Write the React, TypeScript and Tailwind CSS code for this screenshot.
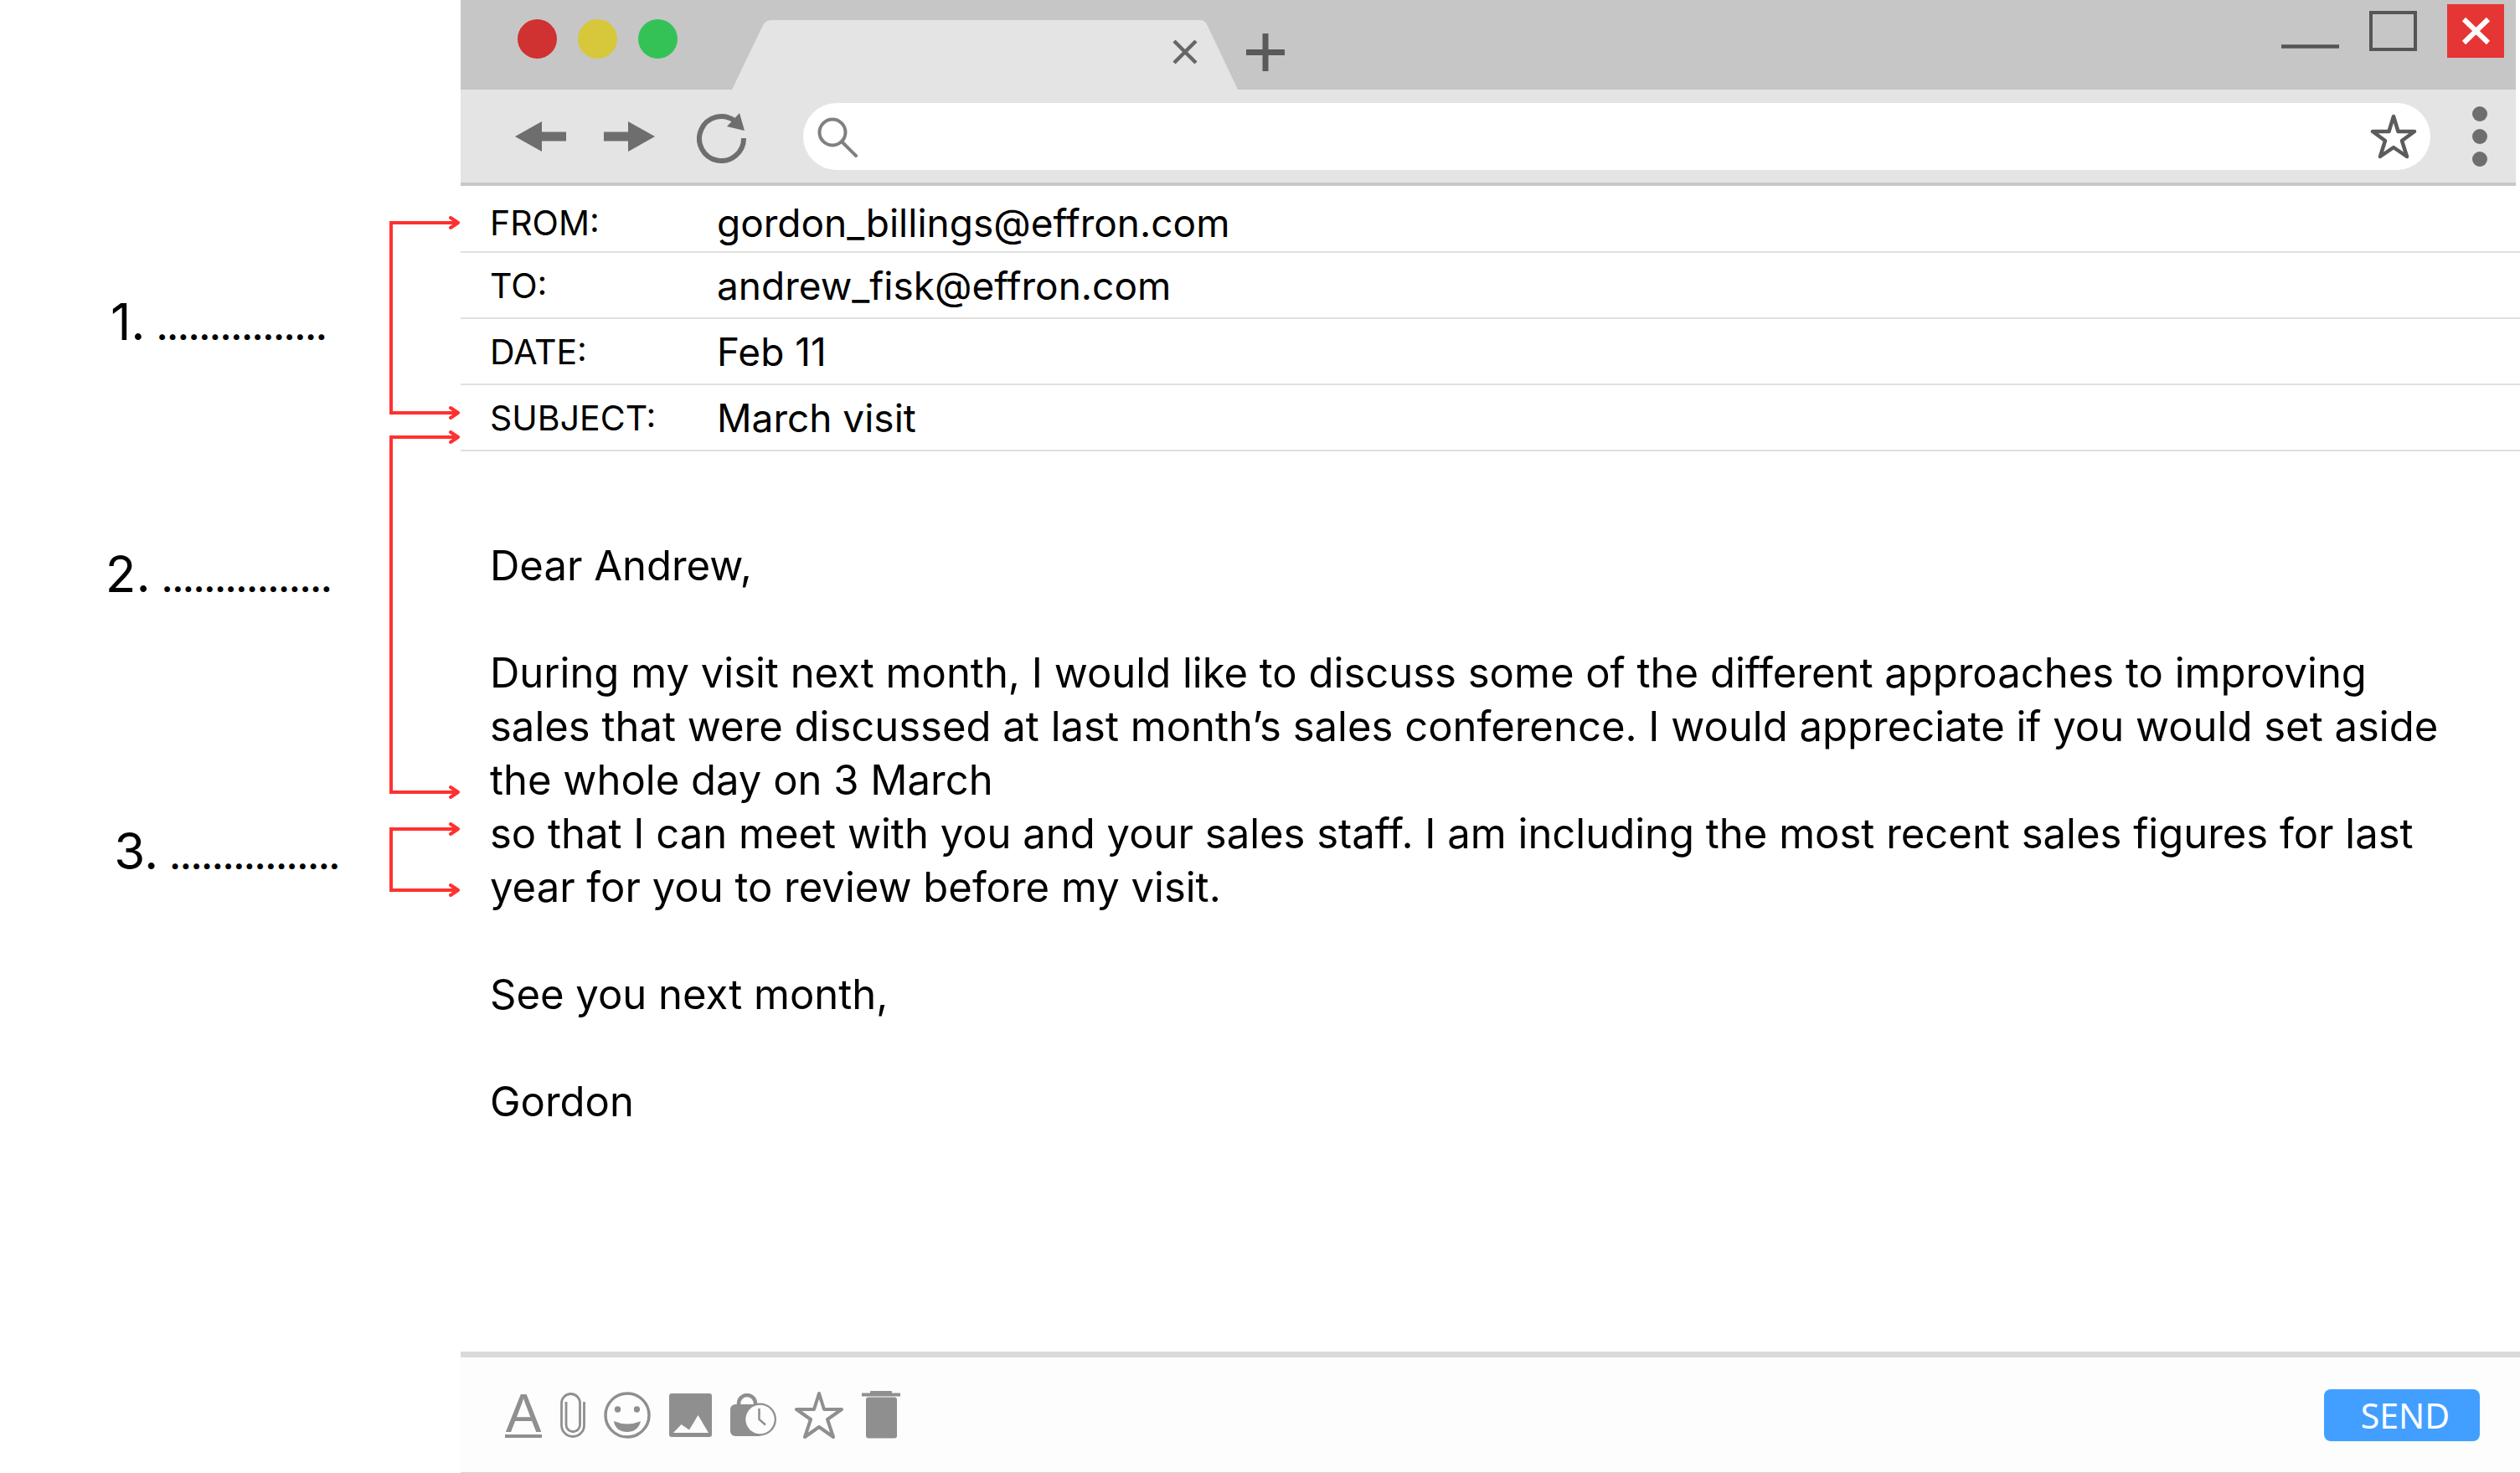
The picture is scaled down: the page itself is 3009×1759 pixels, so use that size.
import React from "react";

const headers = [
  { label: "FROM:", value: "gordon_billings@effron.com" },
  { label: "TO:", value: "andrew_fisk@effron.com" },
  { label: "DATE:", value: "Feb 11" },
  { label: "SUBJECT:", value: "March visit" },
];

const Bracket = ({ height, className }: { height: number; className?: string }) => {
  const bottom = height - 8;
  return (
    <svg width="85" height={height} className={className} fill="none" stroke="#ff3131" strokeWidth="4" aria-hidden="true">
      <path d={`M82 8 H2 V${bottom} H82`} />
      <path d="M73 2 L82 8 L73 14" strokeLinecap="round" strokeLinejoin="round" />
      <path d={`M73 ${bottom - 6} L82 ${bottom} L73 ${bottom + 6}`} strokeLinecap="round" strokeLinejoin="round" />
    </svg>
  );
};

const Blank = ({ number, className }: { number: number; className: string }) => (
  <p className={`text-center text-[60px] leading-[80px] whitespace-pre ${className}`}>
    {number}.<span className="text-[34px] leading-none font-black">{"  ................"}</span>
  </p>
);

const Annotations = () => (
  <aside className="flex w-[550px] shrink-0 justify-end">
    <div className="flex flex-1 flex-col pl-[57px] pt-[344px]">
      <Blank number={1} className="mb-[221px]" />
      <Blank number={2} className="mb-[251px]" />
      <Blank number={3} className="pl-5" />
    </div>
    <div className="flex flex-col pt-[258px]">
      <Bracket height={243} className="mb-[13px]" />
      <Bracket height={440} className="mb-[28px]" />
      <Bracket height={89} />
    </div>
  </aside>
);

const TitleBar = () => (
  <div className="flex h-[107px] items-end bg-[#c6c6c6] pl-[68px] pr-[14px]">
    <div className="flex gap-[25px] self-start pt-[23px]">
      <span className="size-[47px] rounded-full bg-[#cf3230]" />
      <span className="size-[47px] rounded-full bg-[#d7c73a]" />
      <span className="size-[47px] rounded-full bg-[#34c257]" />
    </div>

    {/* Tab */}
    <div className="ml-[65px] flex h-[83px]">
      <svg width="48" height="83" fill="#e4e4e4" aria-hidden="true">
        <path d="M0 83 L37 6 Q40 0 48 0 V83 Z" />
      </svg>
      <div className="flex w-[512px] items-center justify-end bg-[#e4e4e4] pb-2 pr-1">
        <button aria-label="Close tab">
          <svg width="30" height="30" stroke="#666" strokeWidth="4.5" aria-hidden="true">
            <path d="M2 2 L28 28 M28 2 L2 28" />
          </svg>
        </button>
      </div>
      <svg width="44" height="83" fill="#e4e4e4" aria-hidden="true">
        <path d="M0 0 Q5 0 8 7 L44 83 H0 Z" />
      </svg>
    </div>
    <button aria-label="New tab" className="mb-[21px] ml-[10px]">
      <svg width="46" height="47" stroke="#5a5a5a" strokeWidth="7" aria-hidden="true">
        <path d="M23 1 V46 M0 23.5 H46" />
      </svg>
    </button>

    {/* Window controls */}
    <div className="ml-auto flex items-start gap-[36px] self-start">
      <button aria-label="Minimize">
        <svg width="69" height="69" stroke="#555" strokeWidth="4.5" aria-hidden="true">
          <path d="M0 55.5 H69" />
        </svg>
      </button>
      <button aria-label="Maximize">
        <svg width="57" height="69" fill="none" stroke="#555" strokeWidth="4" aria-hidden="true">
          <rect x="2" y="15" width="53" height="44" />
        </svg>
      </button>
      <button aria-label="Close window" className="mt-[5px] bg-[#e63535]">
        <svg width="68" height="64" stroke="#fff" strokeWidth="6" aria-hidden="true">
          <path d="M20 18 L49 46 M49 18 L20 46" />
        </svg>
      </button>
    </div>
  </div>
);

const Toolbar = () => (
  <div className="flex h-[115px] items-center border-b-4 border-[#c8c8c8] bg-[#e4e4e4] pl-[65px] pr-[34px]">
    <button aria-label="Back">
      <svg width="61" height="38" fill="#6e6e6e" aria-hidden="true">
        <path d="M0 19 L32 1 V13.5 H61 V24.5 H32 V37 Z" />
      </svg>
    </button>
    <button aria-label="Forward" className="ml-[45px]">
      <svg width="61" height="38" fill="#6e6e6e" aria-hidden="true">
        <path d="M61 19 L29 1 V13.5 H0 V24.5 H29 V37 Z" />
      </svg>
    </button>
    <button aria-label="Reload" className="ml-[50px]">
      <svg width="60" height="64" fill="none" aria-hidden="true">
        <path d="M56 34 A26.5 26.5 0 1 1 45 13" stroke="#6e6e6e" strokeWidth="6" />
        <path d="M51 4 L57 25 L36 20 Z" fill="#6e6e6e" />
      </svg>
    </button>
    <div className="ml-[67px] flex h-20 flex-1 items-center rounded-full bg-white pl-[17px] pr-[16px]">
      <svg width="50" height="50" fill="none" stroke="#808080" strokeWidth="4" strokeLinecap="round" aria-hidden="true">
        <circle cx="18" cy="20" r="15.5" />
        <path d="M29 31 L46 48" />
      </svg>
      <input type="text" aria-label="Address" className="h-full min-w-0 flex-1 bg-transparent px-4 text-[40px] outline-none" />
      <button aria-label="Bookmark">
        <svg width="56" height="54" fill="none" stroke="#5c5c5c" strokeWidth="4.5" strokeLinejoin="round" aria-hidden="true">
          <path d="M28 3 L33.5 21 H53 L38 32 L44 51 L28 40 L12 51 L18 32 L3 21 H22.5 Z" />
        </svg>
      </button>
    </div>
    <button aria-label="Menu" className="ml-[50px]">
      <svg width="18" height="74" fill="#6e6e6e" aria-hidden="true">
        <circle cx="9" cy="10" r="9" />
        <circle cx="9" cy="37" r="9" />
        <circle cx="9" cy="64" r="9" />
      </svg>
    </button>
  </div>
);

const Footer = () => (
  <footer className="flex h-[145px] items-center justify-between border-b border-t-[7px] border-b-[#d4d4d4] border-t-[#dadada] bg-[#fdfdfd] pl-[53px] pr-[48px] text-[#8f8f8f]">
    <div className="flex items-center gap-[22px]">
      <button aria-label="Text format" className="h-[54px] w-11 border-b-4 border-[#8f8f8f] text-center font-['Liberation_Sans',sans-serif] text-[64px] leading-[46px]">
        A
      </button>
      <button aria-label="Attach file">
        <svg width="30" height="54" fill="none" stroke="currentColor" strokeWidth="2.8" aria-hidden="true">
          <path d="M28.5 11 V39 a13.5 13.5 0 0 1 -27 0 V12.5 a11 11 0 0 1 22 0 V38.5 a8.25 8.25 0 0 1 -16.5 0 V11" />
        </svg>
      </button>
      <button aria-label="Insert emoji">
        <svg width="56" height="56" fill="currentColor" aria-hidden="true">
          <circle cx="28" cy="28" r="26" fill="none" stroke="currentColor" strokeWidth="3.5" />
          <circle cx="16.5" cy="21" r="3.7" />
          <circle cx="39.5" cy="21" r="3.7" />
          <path d="M12 35 Q28 42 44 35 C42 44 36 48 28 48 C20 48 13 44 12 35 Z" />
        </svg>
      </button>
      <button aria-label="Insert picture">
        <svg width="51" height="52" fill="currentColor" aria-hidden="true">
          <rect width="51" height="52" rx="3" />
          <path d="M5 47 L14.5 37 L24 43.5 L34.5 26 L47 47 Z" fill="#fdfdfd" />
        </svg>
      </button>
      <button aria-label="Schedule">
        <svg width="55" height="52" fill="none" stroke="currentColor" aria-hidden="true">
          <rect y="13" width="40" height="38" rx="6" fill="currentColor" stroke="none" />
          <path d="M10 14 V12 A10 10 0 0 1 30 12 V14" strokeWidth="4.5" />
          <circle cx="35.5" cy="31" r="19.5" fill="currentColor" stroke="none" />
          <circle cx="35.5" cy="31" r="17.2" fill="#fdfdfd" stroke="none" />
          <path d="M34.5 18 V31 L42 37.5" strokeWidth="2.5" />
        </svg>
      </button>
      <button aria-label="Add star">
        <svg width="58" height="57" fill="none" stroke="currentColor" strokeWidth="4" strokeLinejoin="round" aria-hidden="true">
          <path d="M29 3 L35 22 H56 L39 34 L46 55 L29 43 L12 55 L19 34 L2 22 H23 Z" />
        </svg>
      </button>
      <button aria-label="Delete">
        <svg width="46" height="57" fill="currentColor" aria-hidden="true">
          <rect x="10" width="26" height="4" rx="1" />
          <rect y="2.5" width="46" height="4" />
          <rect x="5" y="7.5" width="37" height="49" rx="3" />
        </svg>
      </button>
    </div>
    <button className="h-[62px] w-[186px] rounded-lg bg-[#429fff] pl-2 font-['Noto_Sans',sans-serif] text-[41px] leading-[62px] text-white">
      SEND
    </button>
  </footer>
);

export default function App() {
  return (
    <div className="flex min-h-screen bg-white font-['Inter',sans-serif] text-black">
      <Annotations />
      <main className="flex min-w-0 flex-1 flex-col">
        <div className="mr-[5px]">
          <TitleBar />
          <Toolbar />
        </div>

        <dl className="leading-[64px]">
          {headers.map(({ label, value }) => (
            <div key={label} className="flex h-[79px] items-center border-b-2 border-[#e0e0e0] pl-[35px] first:h-20 first:pt-2.5">
              <dt className="w-[271px] text-[41px]">{label}</dt>
              <dd className="text-[46px]">{value}</dd>
            </div>
          ))}
        </dl>

        <article className="flex flex-1 flex-col gap-16 pl-[35px] pt-[105px] text-[49px] leading-[64px]">
          <p>Dear Andrew,</p>
          <p>
            During my visit next month, I would like to discuss some of the different approaches to improving
            <br />
            sales that were discussed at last month’s sales conference. I would appreciate if you would set aside
            <br />
            the whole day on 3 March
            <br />
            so that I can meet with you and your sales staff. I am including the most recent sales figures for last
            <br />
            year for you to review before my visit.
          </p>
          <p>See you next month,</p>
          <p>Gordon</p>
        </article>

        <Footer />
      </main>
    </div>
  );
}
